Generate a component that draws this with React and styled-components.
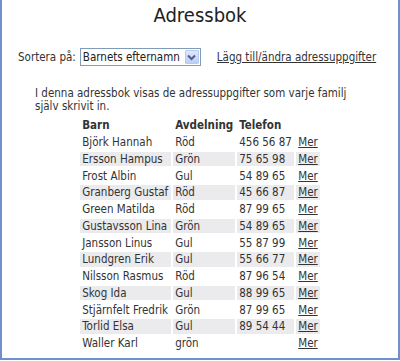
import React from 'react'
import styled, {createGlobalStyle} from 'styled-components'

const GlobalStyle = createGlobalStyle`
  html, body {
    margin: 0;
    padding: 0;
    background: #fff;
  }
`

const rows = [
  {name: 'Björk Hannah', dept: 'Röd', phone: '456 56 87'},
  {name: 'Ersson Hampus', dept: 'Grön', phone: '75 65 98'},
  {name: 'Frost Albin', dept: 'Gul', phone: '54 89 65'},
  {name: 'Granberg Gustaf', dept: 'Röd', phone: '45 66 87'},
  {name: 'Green Matilda', dept: 'Röd', phone: '87 99 65'},
  {name: 'Gustavsson Lina', dept: 'Grön', phone: '54 89 65'},
  {name: 'Jansson Linus', dept: 'Gul', phone: '55 87 99'},
  {name: 'Lundgren Erik', dept: 'Gul', phone: '55 66 77'},
  {name: 'Nilsson Rasmus', dept: 'Röd', phone: '87 96 54'},
  {name: 'Skog Ida', dept: 'Gul', phone: '88 99 65'},
  {name: 'Stjärnfelt Fredrik', dept: 'Grön', phone: '87 99 65'},
  {name: 'Torlid Elsa', dept: 'Gul', phone: '89 54 44'},
  {name: 'Waller Karl', dept: 'grön', phone: ''},
]

const App = () => {
  return (
    <>
      <GlobalStyle />
      <Frame>
        <Title>Adressbok</Title>

        <SortBar>
          <SortLabel>Sortera på:</SortLabel>
          <SelectBox>
            <Select defaultValue="efternamn">
              <option value="efternamn">Barnets efternamn</option>
              <option value="fornamn">Barnets förnamn</option>
              <option value="avdelning">Avdelning</option>
            </Select>
            <ArrowButton>
              <svg width="9" height="7" viewBox="0 0 9 7">
                <path d="M1 1.5 L4.5 5 L8 1.5" fill="none" stroke="#4d6185" strokeWidth="2" />
              </svg>
            </ArrowButton>
          </SelectBox>
          <EditLink href="#">Lägg till/ändra adressuppgifter</EditLink>
        </SortBar>

        <Intro>
          I denna adressbok visas de adressuppgifter som varje familj själv skrivit in.
        </Intro>

        <Table>
          <thead>
            <tr>
              <Th>Barn</Th>
              <Th>Avdelning</Th>
              <Th>Telefon</Th>
              <Th />
            </tr>
          </thead>
          <tbody>
            {rows.map((r, i) => (
              <Row key={r.name} $shaded={i % 2 === 1}>
                <Td $w={91}>{r.name}</Td>
                <Td $w={57}>{r.dept}</Td>
                <Td $w={57}>{r.phone}</Td>
                <Td $w={22}><MoreLink href="#">Mer</MoreLink></Td>
              </Row>
            ))}
          </tbody>
        </Table>
      </Frame>
    </>
  )
}

export default App

const Frame = styled.div`
  box-sizing: border-box;
  width: 400px;
  height: 360px;
  border: 2px solid #6f8fcf;
  border-top: none;
  font-family: "DejaVu Sans Condensed", "DejaVu Sans", sans-serif;
  font-stretch: condensed;
  font-size: 11.5px;
  color: #333;
  overflow: hidden;
`

const Title = styled.h1`
  margin: 0;
  padding-top: 3px;
  text-align: center;
  font-weight: normal;
  font-size: 20px;
  line-height: 24px;
  color: #222;
`

const SortBar = styled.div`
  display: flex;
  align-items: center;
  margin-top: 21px;
  padding-left: 16px;
  height: 18px;
`

const SortLabel = styled.span`
  margin-right: 4px;
`

const SelectBox = styled.div`
  display: flex;
  align-items: center;
  box-sizing: border-box;
  width: 121px;
  height: 18px;
  border: 1px solid #7f9db9;
  background: #fff;
  padding: 1px;
`

const Select = styled.select`
  appearance: none;
  -webkit-appearance: none;
  flex: 1;
  min-width: 0;
  border: none;
  outline: none;
  background: transparent;
  padding: 0 0 0 1px;
  margin: 0;
  font-family: inherit;
  font-stretch: condensed;
  font-size: 11.5px;
  color: #222;
`

const ArrowButton = styled.span`
  display: flex;
  align-items: center;
  justify-content: center;
  box-sizing: border-box;
  width: 14px;
  height: 14px;
  border: 1px solid #b9c9ef;
  border-radius: 1px;
  background: linear-gradient(#dfe8fd, #bccdf7);
`

const EditLink = styled.a`
  margin-left: 16px;
  color: #333;
  text-decoration: underline;
`

const Intro = styled.p`
  margin: 21px 0 0 33px;
  width: 330px;
  line-height: 13px;
`

const Table = styled.table`
  margin: 3px auto 0;
  border-collapse: separate;
  border-spacing: 2px;
`

const Th = styled.th`
  text-align: left;
  padding: 0 2px;
  height: 14.75px;
  line-height: 14px;
  font-weight: bold;
  color: #333;
`

const Row = styled.tr`
  background: ${p => (p.$shaded ? '#ebebed' : 'transparent')};
`

const Td = styled.td`
  width: ${p => p.$w - 4}px;
  padding: 0 2px;
  height: 14.75px;
  line-height: 14px;
  white-space: nowrap;
  background: inherit;
`

const MoreLink = styled.a`
  color: #333;
  text-decoration: underline;
`
